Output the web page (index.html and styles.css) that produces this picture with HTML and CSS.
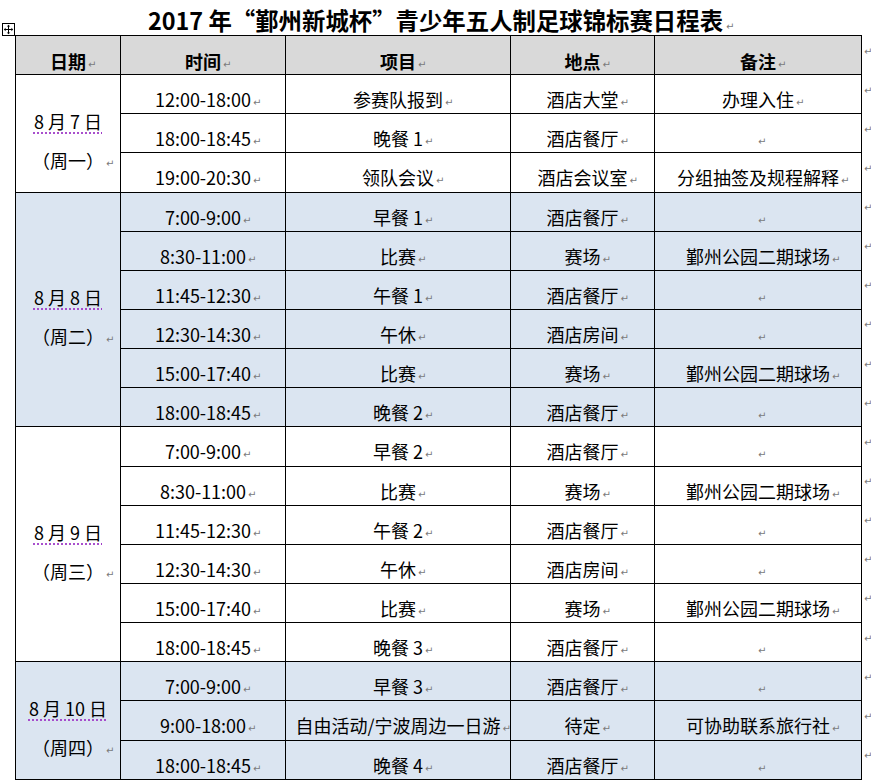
FILE: index.html
```html
<!DOCTYPE html>
<html lang="zh-CN">
<head>
<meta charset="utf-8">
<title>日程表</title>
<link rel="stylesheet" href="styles.css">
</head>
<body>
<div class="title">
  <svg class="handle" width="13" height="13" viewBox="0 0 13 13"><rect x="0.5" y="0.5" width="12" height="12" fill="#fff" stroke="#000"/><path d="M6.5 3v7M3 6.5h7" stroke="#000" stroke-width="1"/><path d="M6.5 1.8L4.8 3.6H8.2Z M6.5 11.2L4.8 9.4H8.2Z M1.8 6.5L3.6 4.8V8.2Z M11.2 6.5L9.4 4.8V8.2Z" fill="#000"/></svg>
  <span class="tt">2017 年“鄞州新城杯”青少年五人制足球锦标赛日程表</span>
</div>
<div class="sheet">
<table>
  <colgroup>
    <col class="w1"><col class="w2"><col class="w3"><col class="w4"><col class="w5"><col class="w6">
  </colgroup>
  <tr class="hd"><th>日期</th><th>时间</th><th>项目</th><th>地点</th><th>备注</th><td class="eor"><span class="rm"></span></td></tr>

  <tr><td class="date" rowspan="3"><span class="u">8 月 7 日</span><br>（周一）</td><td>12:00-18:00</td><td>参赛队报到</td><td>酒店大堂</td><td>办理入住</td><td class="eor"><span class="rm"></span></td></tr>
  <tr><td>18:00-18:45</td><td>晚餐 1</td><td>酒店餐厅</td><td></td><td class="eor"><span class="rm"></span></td></tr>
  <tr><td>19:00-20:30</td><td>领队会议</td><td>酒店会议室</td><td>分组抽签及规程解释</td><td class="eor"><span class="rm"></span></td></tr>

  <tr class="b"><td class="date" rowspan="6"><span class="u">8 月 8 日</span><br>（周二）</td><td>7:00-9:00</td><td>早餐 1</td><td>酒店餐厅</td><td></td><td class="eor"><span class="rm"></span></td></tr>
  <tr class="b"><td>8:30-11:00</td><td>比赛</td><td>赛场</td><td>鄞州公园二期球场</td><td class="eor"><span class="rm"></span></td></tr>
  <tr class="b"><td>11:45-12:30</td><td>午餐 1</td><td>酒店餐厅</td><td></td><td class="eor"><span class="rm"></span></td></tr>
  <tr class="b"><td>12:30-14:30</td><td>午休</td><td>酒店房间</td><td></td><td class="eor"><span class="rm"></span></td></tr>
  <tr class="b"><td>15:00-17:40</td><td>比赛</td><td>赛场</td><td>鄞州公园二期球场</td><td class="eor"><span class="rm"></span></td></tr>
  <tr class="b"><td>18:00-18:45</td><td>晚餐 2</td><td>酒店餐厅</td><td></td><td class="eor"><span class="rm"></span></td></tr>

  <tr><td class="date" rowspan="6"><span class="u">8 月 9 日</span><br>（周三）</td><td>7:00-9:00</td><td>早餐 2</td><td>酒店餐厅</td><td></td><td class="eor"><span class="rm"></span></td></tr>
  <tr><td>8:30-11:00</td><td>比赛</td><td>赛场</td><td>鄞州公园二期球场</td><td class="eor"><span class="rm"></span></td></tr>
  <tr><td>11:45-12:30</td><td>午餐 2</td><td>酒店餐厅</td><td></td><td class="eor"><span class="rm"></span></td></tr>
  <tr><td>12:30-14:30</td><td>午休</td><td>酒店房间</td><td></td><td class="eor"><span class="rm"></span></td></tr>
  <tr><td>15:00-17:40</td><td>比赛</td><td>赛场</td><td>鄞州公园二期球场</td><td class="eor"><span class="rm"></span></td></tr>
  <tr><td>18:00-18:45</td><td>晚餐 3</td><td>酒店餐厅</td><td></td><td class="eor"><span class="rm"></span></td></tr>

  <tr class="b"><td class="date" rowspan="3"><span class="u">8 月 10 日</span><br>（周四）</td><td>7:00-9:00</td><td>早餐 3</td><td>酒店餐厅</td><td></td><td class="eor"><span class="rm"></span></td></tr>
  <tr class="b"><td>9:00-18:00</td><td>自由活动/宁波周边一日游</td><td>待定</td><td>可协助联系旅行社</td><td class="eor"><span class="rm"></span></td></tr>
  <tr class="b"><td>18:00-18:45</td><td>晚餐 4</td><td>酒店餐厅</td><td></td><td class="eor"><span class="rm"></span></td></tr>
</table>
</div>
</body>
</html>
```

FILE: styles.css
```css
* { box-sizing: border-box; }
html, body { margin: 0; padding: 0; background: #fff; }
body {
  font-family: "Noto Sans CJK SC", "Noto Sans", sans-serif;
  color: #000;
  width: 871px;
  height: 781px;
  overflow: hidden;
}
.title {
  position: relative;
  height: 35px;
  padding-top: 5px;
  line-height: 30px;
  font-size: 23.4px;
  font-weight: bold;
  text-align: center;
  white-space: nowrap;
}
.tt::after {
  content: "↵";
  display: inline-block;
  width: 0;
  text-indent: 3px;
  font: 10px/0 "DejaVu Sans", sans-serif;
  color: #7a7a7a;
  vertical-align: 0;
}
.handle { position: absolute; left: 2px; top: 23px; }
.sheet { padding-left: 15px; }
table {
  border-collapse: collapse;
  table-layout: fixed;
  width: 856px;
}
.w1 { width: 105px; }
.w2 { width: 165px; }
.w3 { width: 225px; }
.w4 { width: 144px; }
.w5 { width: 207px; }
.w6 { width: 10px; }
tr { height: 39.15px; }
td, th {
  border: 1px solid #000;
  padding: 11px 0 0;
  vertical-align: top;
  text-align: center;
  font-size: 18px;
  line-height: 26px;
  font-weight: normal;
  white-space: nowrap;
  overflow: visible;
}
th { background: #d9d9d9; font-weight: bold; padding-top: 12px; }
tr.b td { background: #dbe5f1; }
td:not(.eor)::after, th::after {
  content: "↵";
  display: inline-block;
  width: 0;
  height: 0;
  text-indent: 2px;
  font: 10px/0 "DejaVu Sans", sans-serif;
  font-weight: normal;
  color: #7a7a7a;
  vertical-align: 1px;
}
td:empty::after { text-indent: 0; }
td.date {
  vertical-align: middle;
  padding: 15px 0 0;
  line-height: 39px;
}
.u {
  text-decoration: underline dotted #a03cc8;
  text-underline-offset: 4px;
}
tr.b td.eor, td.eor {
  border-top: none;
  border-right: none;
  border-bottom: none;
  background: #fff;
  vertical-align: top;
  padding: 10px 0 0 2px;
  text-align: left;
  font-size: 10px;
  line-height: 10px;
}
.rm { display: block; height: 10px; }
.rm::before {
  content: "↵";
  font: 10px/10px "DejaVu Sans", sans-serif;
  color: #7a7a7a;
}
```
